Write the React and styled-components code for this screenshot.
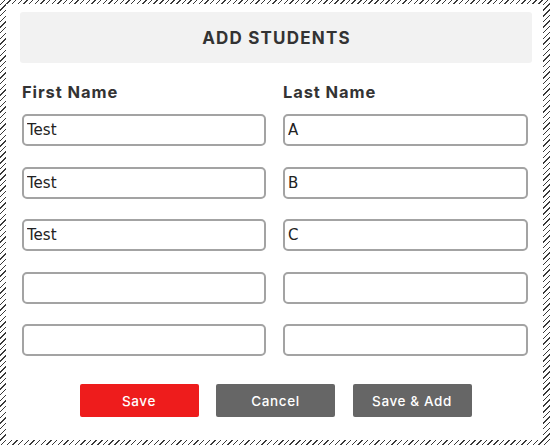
import React from 'react';
import styled, { createGlobalStyle } from 'styled-components';

const GlobalStyle = createGlobalStyle`
    html, body {
        margin: 0;
        padding: 0;
    }
    body {
        width: 550px;
        height: 445px;
        overflow: hidden;
        background: repeating-linear-gradient(135deg, #ffffff 0 3px, #3a3a3a 3px 4px);
        font-family: Inter, 'DejaVu Sans', sans-serif;
    }
    * {
        box-sizing: border-box;
    }
`

const students = [
    { first: 'Test', last: 'A' },
    { first: 'Test', last: 'B' },
    { first: 'Test', last: 'C' },
    { first: '', last: '' },
    { first: '', last: '' },
]

function App() {
    return (
        <>
            <GlobalStyle />
            <Frame>
                <Panel>
                    <Header>ADD STUDENTS</Header>
                    <Form>
                        <Label>First Name</Label>
                        <Label>Last Name</Label>
                        {students.map((s, i) => (
                            <React.Fragment key={i}>
                                <Input defaultValue={s.first} />
                                <Input defaultValue={s.last} />
                            </React.Fragment>
                        ))}
                    </Form>
                    <Actions>
                        <Btn className="primary">Save</Btn>
                        <Btn>Cancel</Btn>
                        <Btn>Save &amp; Add</Btn>
                    </Actions>
                </Panel>
            </Frame>
        </>
    );
}

const Frame = styled.div`
    width: 550px;
    height: 445px;
    padding: 4px 7px 5px 6px;
`

const Panel = styled.div`
    height: 100%;
    background: #fff;
    padding: 8px 11px 0 14px;
    display: flex;
    flex-direction: column;
`

const Header = styled.div`
    height: 51px;
    background: #f2f2f2;
    border-radius: 3px;
    display: flex;
    align-items: center;
    justify-content: center;
    font-size: 17px;
    font-weight: 700;
    color: #333;
    letter-spacing: 1.2px;
    padding-left: 1px;
`

const Form = styled.div`
    margin: 19px 4px 0 2px;
    display: grid;
    grid-template-columns: 244px 245px;
    column-gap: 17px;
    row-gap: 20.5px;
`

const Label = styled.div`
    font-size: 16.5px;
    font-weight: 700;
    color: #333;
    line-height: 20px;
    letter-spacing: 0.9px;
    margin-bottom: -8.5px;
`

const Input = styled.input`
    height: 32px;
    width: 100%;
    border: 2px solid #a3a3a3;
    border-radius: 5px;
    padding: 0 3px;
    font-family: 'DejaVu Sans', sans-serif;
    font-size: 15px;
    color: #222;
    background: #fff;
    outline: none;
`

const Actions = styled.div`
    margin-top: 28px;
    display: flex;
    justify-content: center;
    gap: 17.5px;
    padding-right: 1px;
`

const Btn = styled.button`
    width: 119px;
    height: 33px;
    border: none;
    border-radius: 2px;
    background: #666;
    color: #fff;
    font-family: Inter, 'DejaVu Sans', sans-serif;
    font-size: 13.5px;
    font-weight: 500;
    letter-spacing: 0.6px;
    cursor: pointer;
    &.primary {
        background: #ee1c1c;
    }
`

export default App;
